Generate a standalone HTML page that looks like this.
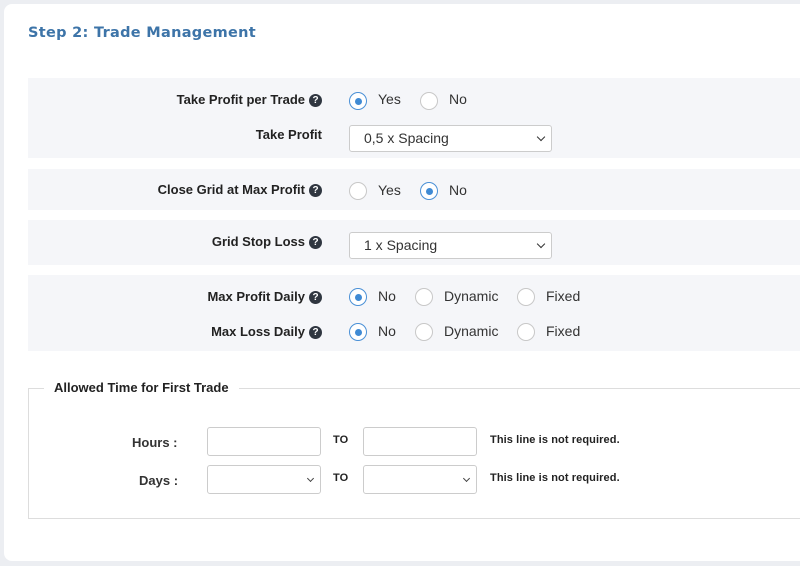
<!DOCTYPE html>
<html><head><style>
body{margin:0;width:800px;height:566px;background:#eceef2;font-family:"Liberation Sans",Arial,sans-serif;position:relative;overflow:hidden}
.card{position:absolute;left:4px;top:4px;width:820px;height:557px;background:#fff;border-radius:8px}
.a{position:absolute}
h2{position:absolute;left:28px;top:25px;margin:0;font-family:"DejaVu Sans",sans-serif;font-size:14.5px;color:#3d74a8;font-weight:bold;letter-spacing:0.3px}
.row{position:absolute;left:28px;width:772px;background:#f5f6f9}
.lbl{position:absolute;font-size:13px;font-weight:bold;color:#222;text-align:right;right:478px;white-space:nowrap}
.q{display:inline-block;width:13px;height:13px;border-radius:50%;background:#2f3640;color:#fff;font-size:10px;line-height:13px;text-align:center;vertical-align:1px;margin-left:4px}
.r{position:absolute;width:18px;height:18px;border:1px solid #c8c8c8;border-radius:50%;background:#fff;box-sizing:border-box}
.r.on{border-color:#4a90d6}
.r.on::after{content:"";position:absolute;left:4.5px;top:4.5px;width:7px;height:7px;border-radius:50%;background:#3f8ad4}
.t{position:absolute;font-size:14px;color:#333}
.sel{position:absolute;height:27px;border:1px solid #ccc;border-radius:3px;background:#fff;box-sizing:border-box;font-size:14px;color:#333;line-height:25px;padding-left:14px}
.sel::after{content:"";position:absolute;right:7px;top:8px;width:5px;height:5px;border-right:1.6px solid #333;border-bottom:1.6px solid #333;transform:rotate(45deg)}
.in{position:absolute;width:114px;height:29px;border:1px solid #ccc;border-radius:3px;box-sizing:border-box;background:#fff}
.in.s::after{content:"";position:absolute;right:7px;top:10px;width:4px;height:4px;border-right:1.4px solid #444;border-bottom:1.4px solid #444;transform:rotate(45deg)}
.sm{position:absolute;font-size:11px;font-weight:bold;color:#222;letter-spacing:0.1px}
</style></head><body>
<div class="card"></div>
<h2>Step 2: Trade Management</h2>

<div class="row" style="top:78px;height:80px"></div>
<div class="row" style="top:169px;height:41px"></div>
<div class="row" style="top:220px;height:45px"></div>
<div class="row" style="top:275px;height:76px"></div>

<div class="lbl" style="top:92px">Take Profit per Trade<span class="q">?</span></div>
<div class="r on" style="left:349px;top:92px"></div><div class="t" style="left:378px;top:91px">Yes</div>
<div class="r" style="left:420px;top:92px"></div><div class="t" style="left:449px;top:91px">No</div>
<div class="lbl" style="top:127px;right:478px">Take Profit</div>
<div class="sel" style="left:349px;top:125px;width:203px">0,5 x Spacing</div>

<div class="lbl" style="top:182px">Close Grid at Max Profit<span class="q">?</span></div>
<div class="r" style="left:349px;top:182px"></div><div class="t" style="left:378px;top:182px">Yes</div>
<div class="r on" style="left:420px;top:182px"></div><div class="t" style="left:449px;top:182px">No</div>

<div class="lbl" style="top:234px">Grid Stop Loss<span class="q">?</span></div>
<div class="sel" style="left:349px;top:232px;width:203px">1 x Spacing</div>

<div class="lbl" style="top:289px">Max Profit Daily<span class="q">?</span></div>
<div class="r on" style="left:349px;top:288px"></div><div class="t" style="left:378px;top:288px">No</div>
<div class="r" style="left:415px;top:288px"></div><div class="t" style="left:444px;top:288px">Dynamic</div>
<div class="r" style="left:517px;top:288px"></div><div class="t" style="left:546px;top:288px">Fixed</div>
<div class="lbl" style="top:324px">Max Loss Daily<span class="q">?</span></div>
<div class="r on" style="left:349px;top:323px"></div><div class="t" style="left:378px;top:323px">No</div>
<div class="r" style="left:415px;top:323px"></div><div class="t" style="left:444px;top:323px">Dynamic</div>
<div class="r" style="left:517px;top:323px"></div><div class="t" style="left:546px;top:323px">Fixed</div>

<div class="a" style="left:28px;top:388px;width:780px;height:131px;border:1px solid #ddd;box-sizing:border-box"></div>
<div class="a" style="left:44px;top:379px;background:#fff;padding:0 10px;font-size:13px;font-weight:bold;color:#222;line-height:18px">Allowed Time for First Trade</div>

<div class="a" style="left:132px;top:435px;font-size:13px;font-weight:bold;color:#333">Hours :</div>
<div class="in" style="left:207px;top:427px"></div>
<div class="sm" style="left:333px;top:434px">TO</div>
<div class="in" style="left:363px;top:427px"></div>
<div class="sm" style="left:490px;top:434px">This line is not required.</div>

<div class="a" style="left:139px;top:473px;font-size:13px;font-weight:bold;color:#333">Days :</div>
<div class="in s" style="left:207px;top:465px"></div>
<div class="sm" style="left:333px;top:472px">TO</div>
<div class="in s" style="left:363px;top:465px"></div>
<div class="sm" style="left:490px;top:472px">This line is not required.</div>
</body></html>
